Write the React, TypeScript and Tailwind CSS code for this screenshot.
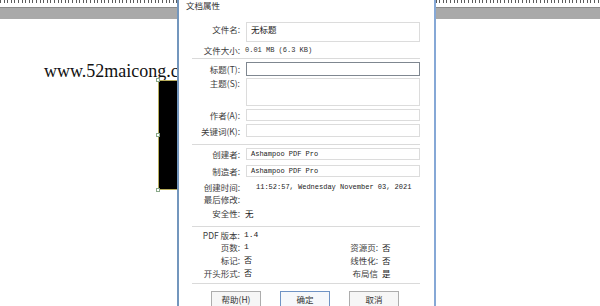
import type { ReactNode } from 'react';

const cjk = "font-['Noto_Sans_CJK_SC','Liberation_Sans',sans-serif]";
const mono = "font-['Liberation_Mono','Noto_Sans_CJK_SC',monospace]";

function Label({ children, className = '' }: { children: ReactNode; className?: string }) {
  return (
    <div className={`flex justify-end whitespace-nowrap text-[8.5px] leading-[10px] text-[#3c3c3c] ${cjk} ${className}`}>
      {children}
    </div>
  );
}

function Box({ h, children, focused }: { h: string; children?: ReactNode; focused?: boolean }) {
  return (
    <div
      className={`${h} border bg-white pl-[4px] ${
        focused ? 'border-[#7f8790]' : 'border-[#dcdcdc]'
      }`}
    >
      {children}
    </div>
  );
}

function Sep({ className = '' }: { className?: string }) {
  return <div className={`h-px w-[228px] bg-[#dadada] ${className}`} />;
}

function InfoRow({ label, value, rLabel, rValue, className = '' }: { label: string; value: string; rLabel?: string; rValue?: string; className?: string }) {
  return (
    <div className={`grid grid-cols-[48px_82px_48px_1fr] gap-x-[4px] ${className}`}>
      <Label>{label}</Label>
      <div className={`text-[8px] leading-[10px] text-[#222] ${/^[\d.]+$/.test(value) ? mono : cjk}`}>{value}</div>
      <Label>{rLabel ?? ''}</Label>
      <div className={`text-[8.5px] leading-[10px] text-[#222] ${cjk}`}>{rValue ?? ''}</div>
    </div>
  );
}

export default function App() {
  return (
    <div className="relative h-[306px] w-[600px] overflow-hidden bg-white">
      {/* document canvas behind the dialog */}
      <div className="h-[3px] bg-[repeating-linear-gradient(90deg,#5c5c5c_0_1px,transparent_1px_3.6px)]" />
      <div className="mt-[4px] h-[12px] border-t border-[#8a8a8a] bg-[#a9a9a9]" />

      <div className="absolute left-[44px] top-[62px] whitespace-nowrap font-['Liberation_Serif',serif] text-[18px] leading-[18px] text-[#111]">
        www.52maicong.com
      </div>
      <div className="absolute left-[158px] top-[80px] h-[110px] w-[40px] border border-[#b9ae5c] bg-black" />
      <div className="absolute left-[156px] top-[78px] h-[4px] w-[4px] border border-[#8aa88a] bg-white" />
      <div className="absolute left-[156px] top-[133px] h-[4px] w-[4px] border border-[#8aa88a] bg-white" />
      <div className="absolute left-[156px] top-[188px] h-[4px] w-[4px] border border-[#8aa88a] bg-white" />

      {/* document properties dialog */}
      <div className="absolute left-[177px] top-0 h-[306px] w-[259px] border-x-2 border-l-[#7396bd] border-r-[#86a8d6] bg-white">
        <div className={`pl-[7px] text-[8.5px] leading-[10px] text-[#333] ${cjk}`}>文档属性</div>

        <div className="pl-[13px]">
          <div className="mt-[12px] grid grid-cols-[48px_174px] gap-x-[6px]">
            <Label className="pt-[2px]">文件名:</Label>
            <Box h="h-[20px]">
              <div className={`pt-[1px] text-[8.5px] leading-[10px] text-[#222] ${cjk}`}>无标题</div>
            </Box>
          </div>

          <div className="mt-[3px] grid grid-cols-[48px_174px] gap-x-[5px]">
            <Label>文件大小:</Label>
            <div className={`text-[7px] leading-[10px] text-[#333] ${mono}`}>0.01 MB (6.3 KB)</div>
          </div>

          <Sep className="mt-[3px]" />

          <div className="mt-[3px] grid grid-cols-[48px_174px] items-center gap-x-[6px]">
            <Label>标题(T):</Label>
            <Box h="h-[14px]" focused />
          </div>
          <div className="mt-[2px] grid grid-cols-[48px_174px] gap-x-[6px]">
            <Label>主题(S):</Label>
            <Box h="h-[28px]" />
          </div>
          <div className="mt-[3px] grid grid-cols-[48px_174px] items-center gap-x-[6px]">
            <Label>作者(A):</Label>
            <Box h="h-[12px]" />
          </div>
          <div className="mt-[3px] grid grid-cols-[48px_174px] items-center gap-x-[6px]">
            <Label>关键词(K):</Label>
            <Box h="h-[13px]" />
          </div>

          <Sep className="mt-[7px]" />

          <div className="mt-[3px] grid grid-cols-[48px_174px] items-center gap-x-[6px]">
            <Label>创建者:</Label>
            <Box h="h-[12px]">
              <div className={`text-[7px] leading-[10px] text-[#222] ${mono}`}>Ashampoo PDF Pro</div>
            </Box>
          </div>
          <div className="mt-[5px] grid grid-cols-[48px_174px] items-center gap-x-[6px]">
            <Label>制造者:</Label>
            <Box h="h-[12px]">
              <div className={`text-[7px] leading-[10px] text-[#222] ${mono}`}>Ashampoo PDF Pro</div>
            </Box>
          </div>

          <div className="mt-[5px] grid grid-cols-[48px_1fr] gap-x-[16px]">
            <Label>创建时间:</Label>
            <div className={`text-[7px] leading-[10px] text-[#222] ${mono}`}>11:52:57, Wednesday November 03, 2021</div>
          </div>
          <div className="mt-[2px] grid grid-cols-[48px_1fr]">
            <Label>最后修改:</Label>
          </div>
          <div className="mt-[4px] grid grid-cols-[48px_1fr] gap-x-[5px]">
            <Label>安全性:</Label>
            <div className={`text-[8.5px] leading-[10px] text-[#222] ${cjk}`}>无</div>
          </div>

          <Sep className="mt-[8px]" />

          <InfoRow className="mt-[3px]" label="PDF 版本:" value="1.4" />
          <InfoRow className="mt-[2px]" label="页数:" value="1" rLabel="资源页:" rValue="否" />
          <InfoRow className="mt-[3px]" label="标记:" value="否" rLabel="线性化:" rValue="否" />
          <InfoRow className="mt-[3px]" label="开头形式:" value="否" rLabel="布局信" rValue="是" />

          <Sep className="mt-[5px]" />

          <div className={`mt-[7px] flex gap-[19px] pl-[19px] text-[8.5px] text-[#333] ${cjk}`}>
            <div className="flex h-[16px] w-[50px] items-center justify-center border border-[#adadad] bg-[#f6f6f6] leading-[10px]">帮助(H)</div>
            <div className="flex h-[16px] w-[50px] items-center justify-center border border-[#6f93c4] bg-[#f6f8fb] leading-[10px]">确定</div>
            <div className="flex h-[16px] w-[50px] items-center justify-center border border-[#adadad] bg-[#f6f6f6] leading-[10px]">取消</div>
          </div>
        </div>
      </div>
    </div>
  );
}
